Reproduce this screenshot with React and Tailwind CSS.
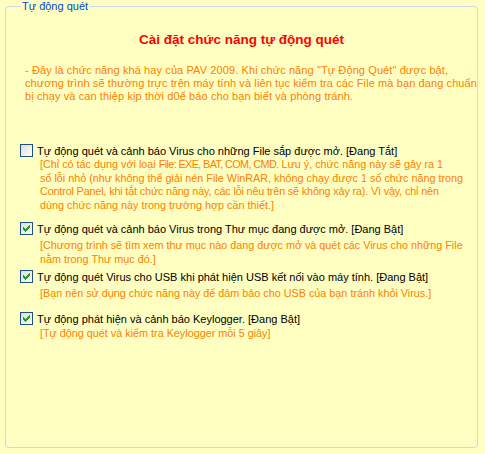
import React from "react";

function CheckBox({ checked }) {
  return (
    <div className="relative w-[13px] h-[13px] shrink-0 border border-[#1C5180] bg-gradient-to-br from-[#DCDCD7] to-[#FFFFFF]">
      {checked && (
        <svg
          className="absolute left-[2px] top-[2px]"
          width="7"
          height="7"
          viewBox="0 0 7 7"
          shapeRendering="crispEdges"
        >
          <path
            fill="#21A121"
            d="M6 0h1v1h-1z M5 1h2v1h-2z M0 2h1v1h-1z M4 2h3v1h-3z M0 3h2v1h-2z M3 3h3v1h-3z M0 4h5v1h-5z M1 5h3v1h-3z M2 6h1v1h-1z"
          />
        </svg>
      )}
    </div>
  );
}

function Row({ checked, label, className }) {
  return (
    <div className={"flex items-start pl-[14px] h-[14px] " + (className || "")}>
      <CheckBox checked={checked} />
      <span className="ml-[4px] leading-[14px] text-black whitespace-nowrap">{label}</span>
    </div>
  );
}

function Desc({ lines, className }) {
  return (
    <div
      className={
        "pl-[34px] text-[#FF8000] text-[10.8px] leading-[13.5px] " + (className || "")
      }
    >
      {lines.map((l, i) => (
        <div key={i} className="whitespace-nowrap">
          {l}
        </div>
      ))}
    </div>
  );
}

export default function App() {
  return (
    <div className="w-[485px] h-[454px] bg-[#FFFFC1] overflow-hidden pt-[6px] pl-[5px] font-['Liberation_Sans',Arial,sans-serif] text-[11px]">
      <div className="relative w-[473px] h-[442px] border border-[#D0D7E5] rounded-[4px] flex flex-col">
        <div className="absolute left-[15px] top-[-7.5px] px-[1px] bg-[#FFFFC1] text-[#0046D5] leading-[13px] whitespace-nowrap">
          Tự động quét
        </div>

        <div className="mt-[25px] h-[16px] leading-[16px] text-center text-[13.5px] font-bold text-[#FF0000]">
          Cài đặt chức năng tự động quét
        </div>

        <div className="mt-[16px] pl-[19px] text-[#FF8000] leading-[13px] tracking-[0.1px]">
          <div className="whitespace-nowrap">
            - Đây là chức năng khá hay của PAV 2009. Khi chức năng "Tự Động Quét" được bật,
          </div>
          <div className="whitespace-nowrap">
            chương trình sẽ thường trực trên máy tính và liên tục kiểm tra các File mà bạn đang chuẩn
          </div>
          <div className="whitespace-nowrap">
            bị chạy và can thiệp kịp thời d0ể báo cho bạn biết và phòng tránh.
          </div>
        </div>

        <Row
          className="mt-[41px]"
          checked={false}
          label="Tự động quét và cảnh báo Virus cho những File sắp được mở. [Đang Tắt]"
        />
        <Desc
          lines={[
            <>
              [Chỉ có tác dụng với loại{" "}
              <span className="tracking-[-0.6px]">File: EXE, BAT, COM, CMD.</span> Lưu ý, chức năng
              này sẽ gây ra 1
            </>,
            "số lỗi nhỏ (như không thể giải nén File WinRAR, không chạy được 1 số chức năng trong",
            <span className="tracking-[-0.15px]">
              Control Panel, khi tắt chức năng này, các lỗi nêu trên sẽ không xảy ra). Vì vậy, chỉ nên
            </span>,
            "dùng chức năng này trong trường hợp cần thiết.]",
          ]}
        />

        <Row
          className="mt-[10px]"
          checked={true}
          label="Tự động quét và cảnh báo Virus trong Thư mục đang được mở. [Đang Bật]"
        />
        <Desc
          className="mt-[3px]"
          lines={[
            "[Chương trình sẽ tìm xem thư mục nào đang được mở và quét các Virus cho những File",
            "nằm trong Thư mục đó.]",
          ]}
        />

        <Row
          className="mt-[4px]"
          checked={true}
          label="Tự động quét Virus cho USB khi phát hiện USB kết nối vào máy tính. [Đang Bật]"
        />
        <Desc
          className="mt-[3px]"
          lines={["[Bạn nên sử dụng chức năng này để đảm bảo cho USB của bạn tránh khỏi Virus.]"]}
        />

        <Row
          className="mt-[11px]"
          checked={true}
          label="Tự động phát hiện và cảnh báo Keylogger. [Đang Bật]"
        />
        <Desc className="mt-[1px]" lines={["[Tự động quét và kiểm tra Keylogger mỗi 5 giây]"]} />
      </div>
    </div>
  );
}
